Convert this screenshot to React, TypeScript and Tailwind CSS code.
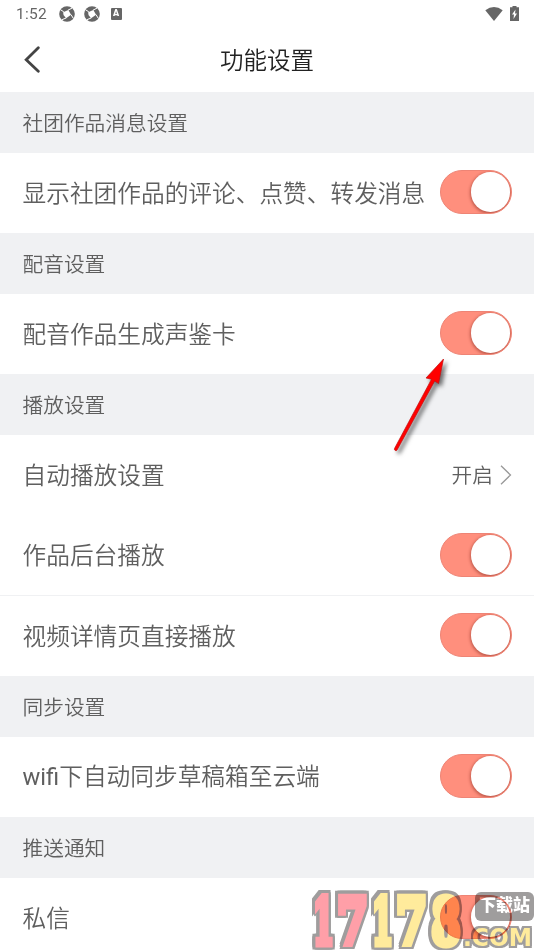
import React from "react";

function Section({ children }: { children: React.ReactNode }) {
  return (
    <h2 className="flex h-[60.5px] items-center bg-[#f0f1f3] px-[22.5px] text-[20.7px] font-[350] text-[#5f5f5f]">{children}</h2>
  );
}

function Row({ label, children, divided = false }: { label: React.ReactNode; children: React.ReactNode; divided?: boolean }) {
  return (
    <div
      className={`flex h-[80.5px] items-center justify-between bg-white pr-[22px] pl-[22.5px] text-[23.7px] font-[350] whitespace-nowrap text-[#5f5f5f] ${divided ? "shadow-[inset_0_-1px_0_#f0f1f3]" : ""}`}
    >
      <span>{label}</span>
      {children}
    </div>
  );
}

function Toggle() {
  return (
    <button
      role="switch"
      aria-checked="true"
      className="mb-px flex h-[44px] w-[72px] shrink-0 items-center justify-end overflow-hidden rounded-full border border-[#ee8475] bg-[#ff8f7d] pr-px"
    >
      <span className="block h-[40px] w-[39.5px] rounded-full bg-white shadow-[0_1px_3px_1px_rgba(120,30,20,0.45)]" />
    </button>
  );
}

function Aperture() {
  return (
    <svg width="16" height="16" viewBox="0 0 16 16">
      <circle cx="8" cy="8" r="7.8" fill="#666" />
      <path d="M4.2 6.2 9.3 4l2.8 4.8-5 3.4-2.6-3.1z" fill="#fff" />
      <path d="M4.8 5.8 1.6 3.8M9 4.2 13.4 1.9M12 8.6l2.2 3.6M7.2 12 2.6 13.8" stroke="#fff" strokeWidth="1" />
    </svg>
  );
}

function StatusBar() {
  return (
    <div className="flex h-[27px] items-center justify-between pr-[15px] pl-[16px] text-[#666666]">
      <div className="flex items-center">
        <span className="w-[43px] pt-[2px] font-[Roboto] text-[15.5px] tracking-[0.3px]">1:52</span>
        <Aperture />
        <span className="w-[9px]" />
        <Aperture />
        <span className="ml-[10.5px] flex h-[12px] w-[11px] items-center justify-center rounded-[1px] bg-[#666666] font-[Roboto] text-[9px] font-black text-white">
          A
        </span>
      </div>
      <div className="flex items-center gap-[7px]">
        <svg width="18" height="14" viewBox="0 0 18 14">
          <path d="M.3 3.2Q9-3 17.7 3.2L9 14z" fill="#666" />
        </svg>
        <svg className="mb-px" width="9" height="15" viewBox="0 0 9 15">
          <path d="M2.5 0h4v1.3H9V15H0V1.3h2.5z" fill="#666" />
          <path d="M5.5 3.5 2 8.5h2L3.5 13 7 7.5H5z" fill="#fff" />
        </svg>
      </div>
    </div>
  );
}

function Header() {
  return (
    <header className="grid h-[65px] grid-cols-[1fr_auto_1fr] items-center px-[22px]">
      <svg className="mb-[2px]" width="20" height="28" viewBox="0 0 20 28" fill="none" stroke="#444" strokeWidth="2.8" strokeLinecap="round">
        <path d="M16.3 2.8 4.2 14.8l12.1 11.5" />
      </svg>
      <h1 className="text-[23.5px] font-[350] text-[#222222]">功能设置</h1>
      <span />
    </header>
  );
}

function Arrow() {
  return (
    <svg className="absolute top-[350px] left-[385px]" width="75" height="110" viewBox="0 0 75 110">
      <g className="drop-shadow-[3px_3px_2px_rgba(0,0,0,0.55)]">
        <path d="M58.5 9 41 28l5.5 1.2L9.5 98.5a1.5 1.5 0 0 0 2.7 1.3L49.7 31l3.8 2.5z" fill="#ff0000" stroke="#c01010" strokeWidth=".7" />
      </g>
    </svg>
  );
}

const digits = [
  { c: "1", x: 5, w: 21, color: "#ff9fa8" },
  { c: "7", x: 29, w: 31, color: "#ff9fa8" },
  { c: "1", x: 64, w: 21, color: "#ffeb9c" },
  { c: "7", x: 88, w: 31, color: "#ffeb9c" },
  { c: "8", x: 123.5, w: 29, color: "#ffeb9c" },
];

function Watermark() {
  return (
    <svg className="pointer-events-none absolute bottom-0 left-[308px] overflow-visible mix-blend-multiply" width="226" height="64" viewBox="0 0 226 64">
      <rect x="167" y="6" width="59" height="29" rx="6" fill="#9f9d9d" />
      <g
        className="font-['DejaVu_Serif'] [filter:drop-shadow(2.5px_0_0_#9f9d9d)_drop-shadow(-2.5px_0_0_#9f9d9d)_drop-shadow(0_2.5px_0_#9f9d9d)_drop-shadow(0_-2.5px_0_#9f9d9d)]"
        fontWeight="700"
        strokeLinejoin="miter"
      >
        {digits.map((d) => (
          <text key={d.x} x={d.x} y="57.5" fontSize="63.5" strokeWidth="7" fill={d.color} stroke={d.color} textLength={d.w} lengthAdjust="spacingAndGlyphs">
            {d.c}
          </text>
        ))}
      </g>
      <text
        x="155"
        y="59.5"
        fontSize="24"
        className="font-['DejaVu_Sans'] [filter:drop-shadow(2px_0_0_#9f9d9d)_drop-shadow(-2px_0_0_#9f9d9d)_drop-shadow(0_2px_0_#9f9d9d)_drop-shadow(0_-2px_0_#9f9d9d)]"
        fontWeight="700"
        fill="#ffeb9c"
        textLength="69"
        lengthAdjust="spacingAndGlyphs"
      >
        .COM
      </text>
      <text x="171" y="25" fontSize="17" fontWeight="900" fill="#fff">下载站</text>
    </svg>
  );
}

export default function App() {
  return (
    <main className="relative h-[950px] w-[534px] overflow-hidden bg-white font-['Noto_Sans_CJK_SC',sans-serif]">
      <StatusBar />
      <Header />
      <Section>社团作品消息设置</Section>
      <Row label="显示社团作品的评论、点赞、转发消息"><Toggle /></Row>
      <Section>配音设置</Section>
      <Row label="配音作品生成声鉴卡"><Toggle /></Row>
      <Section>播放设置</Section>
      <Row label="自动播放设置">
        <span className="flex items-center gap-[7px] text-[20.7px]">
          开启
          <svg width="12" height="20" viewBox="0 0 12 20" fill="none" stroke="#999" strokeWidth="1.3">
            <path d="m1 .8 9.5 9.2L1 19.2" />
          </svg>
        </span>
      </Row>
      <Row label="作品后台播放" divided><Toggle /></Row>
      <Row label="视频详情页直接播放"><Toggle /></Row>
      <Section>同步设置</Section>
      <Row label={<><span className="font-[Roboto] font-normal">wifi</span>下自动同步草稿箱至云端</>}><Toggle /></Row>
      <Section>推送通知</Section>
      <Row label="私信"><Toggle /></Row>
      <Arrow />
      <Watermark />
    </main>
  );
}
